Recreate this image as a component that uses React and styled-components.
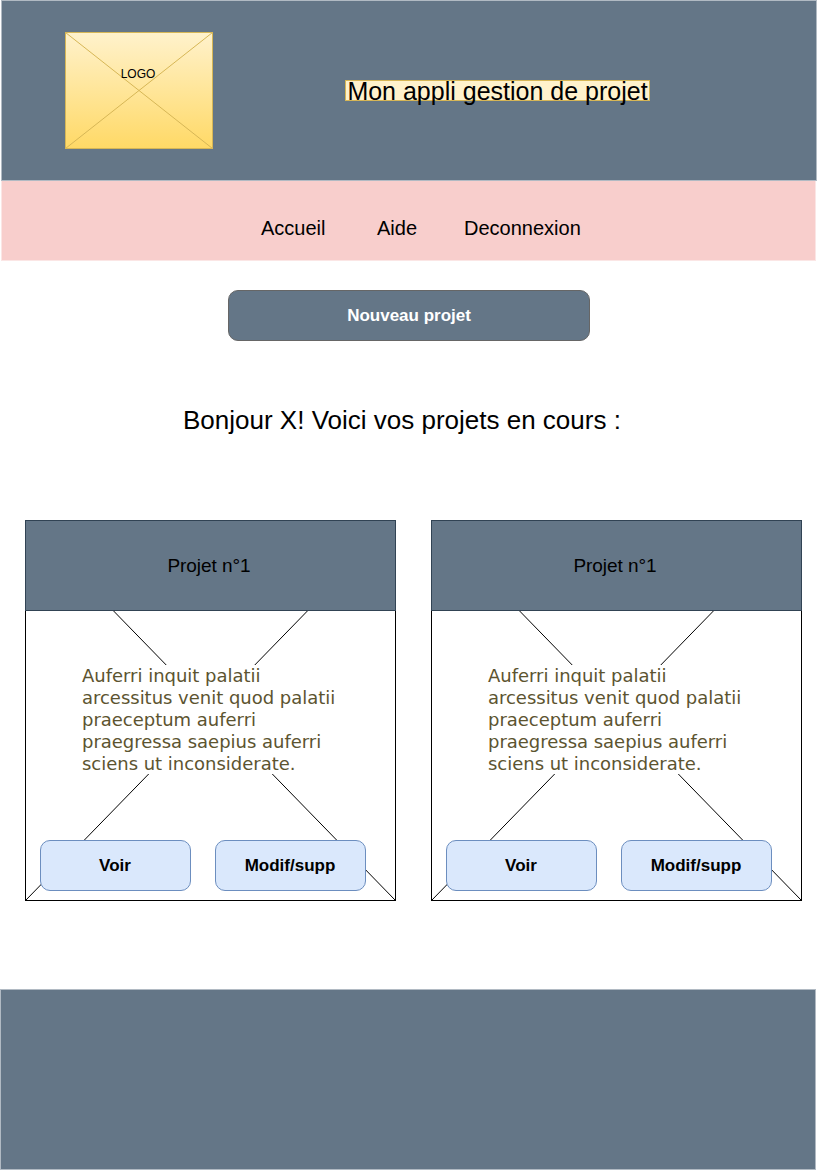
import React from "react";
import styled, { createGlobalStyle } from "styled-components";

const Global = createGlobalStyle`
  * { box-sizing: border-box; }
  body { margin: 0; background: #fff; color: #000; font-family: "Liberation Sans", Arial, sans-serif; }
  h1, h2, p { margin: 0; font-weight: 400; }
`;
const Page = styled.div`
  width: 818px;
  height: 1170px;
  overflow: hidden;
`;
const Header = styled.header`
  display: flex;
  align-items: flex-start;
  width: 816px;
  height: 181px;
  margin-left: 1px;
  padding: 31px 0 0 63px;
  background: #647687;
  border: 1px solid #b1bac3;
`;
const Logo = styled.div`
  position: relative;
  width: 148px;
  height: 117px;
  padding: 35px 2px 0 0;
  text-align: center;
  font-size: 12px;
  line-height: 14px;
`;
const Cross = styled.svg`
  position: absolute;
  inset: 0;
  z-index: 0;
`;
const LogoText = styled.span`
  position: relative;
  display: block;
`;
const Title = styled.h1`
  width: 305px;
  height: 21px;
  margin: 48px 0 0 132px;
  background: #fff2cc;
  border: 1px solid #d6b656;
  font-size: 25px;
  line-height: 20px;
  text-align: center;
  white-space: nowrap;
`;
const Nav = styled.nav`
  display: flex;
  width: 815px;
  height: 80px;
  margin-left: 1px;
  padding: 35px 0 0 259px;
  background: #f8cecc;
  border: 1px solid #fbe6e5;
  border-top: 0;
  font-size: 20px;
  line-height: 24px;
`;
const NavItem = styled.a`
  width: ${(p) => p.$width}px;
  white-space: nowrap;
`;
const Button = styled.button`
  width: ${(p) => (p.$primary ? 362 : 151)}px;
  height: 51px;
  padding: ${(p) => (p.$primary ? "0" : "0 1px 0 0")};
  border: 1px solid ${(p) => (p.$primary ? "#666" : "#6c8ebf")};
  border-radius: 10px;
  background: ${(p) => (p.$primary ? "#647687" : "#dae8fc")};
  color: ${(p) => (p.$primary ? "#fff" : "#000")};
  font: bold 17px "Liberation Sans", Arial, sans-serif;
`;
const Main = styled.main`
  height: 728px;
  padding-top: 29px;
`;
const NewProject = styled.div`
  padding-left: 228px;
  height: 51px;
`;
const Greeting = styled.h2`
  margin: 64px 0 0 183px;
  font-size: 26px;
  line-height: 30px;
  white-space: nowrap;
`;
const Projects = styled.section`
  display: flex;
  gap: 35px;
  margin: 85px 0 0 25px;
`;
const Card = styled.article`
  position: relative;
  width: 371px;
  height: 381px;
`;
const CardHeader = styled.div`
  position: relative;
  height: 91px;
  padding-right: 3px;
  border: 1px solid #314354;
  background: #647687;
  text-align: center;
  font-size: 19px;
  letter-spacing: -0.05px;
  line-height: 89px;
`;
const Description = styled.p`
  position: relative;
  width: 268px;
  height: 109px;
  margin: 54px 0 0 57px;
  background: #fff;
  color: #5c5430;
  font: 18px/22px "DejaVu Sans", Verdana, sans-serif;
  letter-spacing: -0.02px;
  white-space: nowrap;
`;
const Actions = styled.div`
  position: relative;
  display: flex;
  gap: 24px;
  margin: 66px 0 0 15px;
`;
const Footer = styled.footer`
  width: 816px;
  height: 181px;
  background: #647687;
  border: 1px solid #b1bac3;
`;

const text = ["Auferri inquit palatii", "arcessitus venit quod palatii", "praeceptum auferri", "praegressa saepius auferri", "sciens ut inconsiderate."];

function ProjectCard() {
  return (
    <Card>
      <Cross width="371" height="381" fill="none" stroke="#000">
        <rect x=".5" y=".5" width="370" height="380" />
        <path d="M.5 .5L370.5 380.5M370.5 .5L.5 380.5" />
      </Cross>
      <CardHeader>Projet n°1</CardHeader>
      <Description>
        {text.map((line) => <React.Fragment key={line}>{line}<br /></React.Fragment>)}
      </Description>
      <Actions>
        <Button>Voir</Button>
        <Button>Modif/supp</Button>
      </Actions>
    </Card>
  );
}

export default function App() {
  return (
    <Page>
      <Global />
      <Header>
        <Logo>
          <Cross width="148" height="117" stroke="#d6b656">
            <defs>
              <linearGradient id="gold" x1="0" y1="0" x2="0" y2="1">
                <stop stopColor="#fff2cc" />
                <stop offset="1" stopColor="#ffd966" />
              </linearGradient>
            </defs>
            <rect x=".5" y=".5" width="147" height="116" fill="url(#gold)" />
            <path d="M.5 .5L147.5 116.5M147.5 .5L.5 116.5" />
          </Cross>
          <LogoText>LOGO</LogoText>
        </Logo>
        <Title>Mon appli gestion de projet</Title>
      </Header>
      <Nav>
        <NavItem $width={116}>Accueil</NavItem>
        <NavItem $width={87}>Aide</NavItem>
        <NavItem $width={120}>Deconnexion</NavItem>
      </Nav>
      <Main>
        <NewProject><Button $primary>Nouveau projet</Button></NewProject>
        <Greeting>Bonjour X! Voici vos projets en cours :</Greeting>
        <Projects>
          <ProjectCard />
          <ProjectCard />
        </Projects>
      </Main>
      <Footer />
    </Page>
  );
}
